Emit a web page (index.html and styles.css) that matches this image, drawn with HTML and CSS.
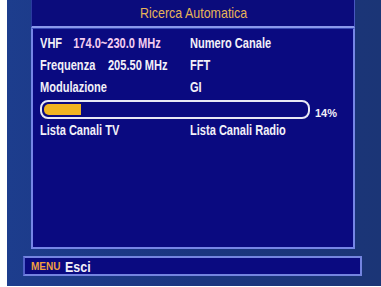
FILE: index.html
```html
<!DOCTYPE html>
<html lang="en">
<head>
    <meta charset="UTF-8">
    <meta name="viewport" content="width=device-width, initial-scale=1.0">
    <title>Ricerca Automatica</title>
    <link rel="stylesheet" href="styles.css">
</head>
<body>
    <div class="screen">
        <div class="window">
            <!-- Title bar -->
            <div class="title-bar"><span class="narrow">Ricerca Automatica</span></div>

            <!-- Scan panel -->
            <div class="panel">
                <div class="grid">
                    <div class="cell narrow"><span class="label">VHF</span><span class="pink">174.0~230.0 MHz</span></div>
                    <div class="cell narrow">Numero Canale</div>
                    <div class="cell narrow"><span class="label wide">Frequenza</span><span>205.50 MHz</span></div>
                    <div class="cell narrow">FFT</div>
                    <div class="cell narrow">Modulazione</div>
                    <div class="cell narrow">GI</div>
                </div>

                <div class="progress-row">
                    <div class="progress">
                        <div class="progress-fill" style="width: 14%"></div>
                    </div>
                    <span class="percent">14%</span>
                </div>

                <div class="grid">
                    <div class="cell narrow">Lista Canali TV</div>
                    <div class="cell narrow">Lista Canali Radio</div>
                </div>
            </div>
        </div>

        <!-- Help bar -->
        <div class="footer">
            <span class="key">MENU</span>
            <span class="action narrow">Esci</span>
        </div>
    </div>
</body>
</html>
```

FILE: styles.css
```css
* {
    margin: 0;
    padding: 0;
    box-sizing: border-box;
}

body {
    background-color: #fff;
    font-family: "Liberation Sans", Arial, sans-serif;
    color: #f2f0f8;
}

/* the receiver font is a condensed sans */
.narrow {
    display: inline-block;
    transform: scaleX(0.83);
    transform-origin: left center;
}

.screen {
    margin-left: 7px;
    width: 374px;
    height: 286px;
    background: linear-gradient(90deg, #1d3d8d 0%, #1a3580 50%, #1b3576 100%);
    display: flex;
    flex-direction: column;
}

.window {
    margin-left: 24px;
    width: 324px;
    display: flex;
    flex-direction: column;
}

.title-bar {
    height: 28px;
    background-color: #0b0c7c;
    border-left: 1px solid #2a3aa0;
    border-right: 1px solid #4858c0;
    border-bottom: 2px solid #8a98ec;
    color: #e8b458;
    font-size: 15px;
    line-height: 26px;
    padding-left: 108px;
}

.panel {
    height: 221px;
    background-color: #0a0a80;
    border: 2px solid #7686e6;
    border-top: 1px solid #3848b4;
    padding: 3px 0 0 7px;
}

.grid {
    display: grid;
    grid-template-columns: 150px 1fr;
}

.cell {
    font-size: 14px;
    font-weight: bold;
    line-height: 22px;
    white-space: nowrap;
}

.cell.narrow {
    transform: scaleX(0.79);
}

.label {
    margin-right: 14px;
}

.label.wide {
    margin-right: 16px;
}

.pink {
    color: #f4cdf0;
}

.progress-row {
    display: flex;
    align-items: flex-end;
    height: 21px;
    padding-top: 2px;
}

.progress {
    width: 270px;
    height: 19px;
    border: 2px solid #e8e8f4;
    border-radius: 8px;
    padding: 2px;
    background-color: #0a0a80;
}

.progress-fill {
    height: 100%;
    background-color: #f0b420;
    border-radius: 5px 0 0 5px;
}

.percent {
    font-size: 11px;
    font-weight: bold;
    margin-left: 5px;
    line-height: 12px;
}

.footer {
    margin: 7px 0 0 16px;
    width: 339px;
    height: 20px;
    background-color: #0a0a80;
    border: 2px solid #7484e0;
    border-left-color: #5060c8;
    display: flex;
    align-items: center;
    padding-left: 6px;
}

.key {
    color: #f0a040;
    font-size: 10px;
    font-weight: bold;
    margin-right: 5px;
}

.action {
    font-size: 15px;
    font-weight: bold;
}
```
